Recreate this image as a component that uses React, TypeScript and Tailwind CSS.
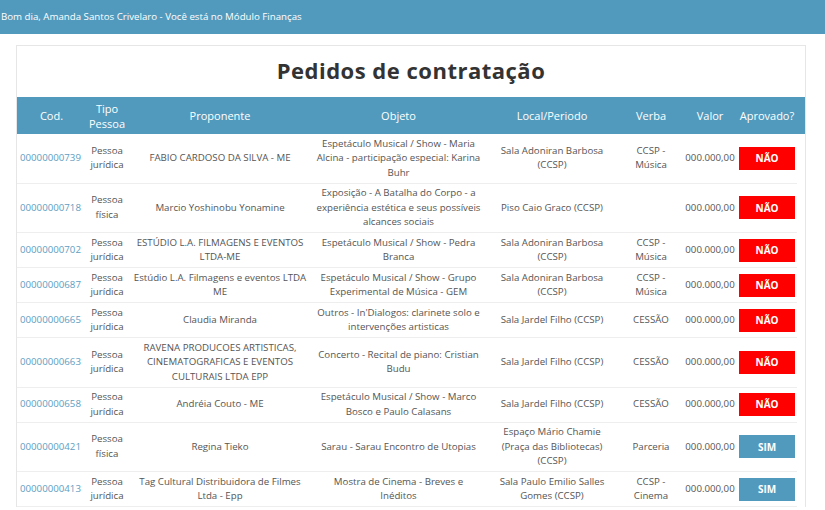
type Row = {
  cod: string;
  tipo: string;
  proponente: string[];
  objeto: string[];
  local: string[];
  verba: string[];
  aprovado: boolean;
};

const rows: Row[] = [
  {
    cod: "00000000739",
    tipo: "jurídica",
    proponente: ["FABIO CARDOSO DA SILVA - ME"],
    objeto: ["Espetáculo Musical / Show - Maria", "Alcina - participação especial: Karina", "Buhr"],
    local: ["Sala Adoniran Barbosa", "(CCSP)"],
    verba: ["CCSP -", "Música"],
    aprovado: false,
  },
  {
    cod: "00000000718",
    tipo: "física",
    proponente: ["Marcio Yoshinobu Yonamine"],
    objeto: ["Exposição - A Batalha do Corpo - a", "experiência estética e seus possíveis", "alcances sociais"],
    local: ["Piso Caio Graco (CCSP)"],
    verba: [],
    aprovado: false,
  },
  {
    cod: "00000000702",
    tipo: "jurídica",
    proponente: ["ESTÚDIO L.A. FILMAGENS E EVENTOS", "LTDA-ME"],
    objeto: ["Espetáculo Musical / Show - Pedra", "Branca"],
    local: ["Sala Adoniran Barbosa", "(CCSP)"],
    verba: ["CCSP -", "Música"],
    aprovado: false,
  },
  {
    cod: "00000000687",
    tipo: "jurídica",
    proponente: ["Estúdio L.A. Filmagens e eventos LTDA", "ME"],
    objeto: ["Espetáculo Musical / Show - Grupo", "Experimental de Música - GEM"],
    local: ["Sala Adoniran Barbosa", "(CCSP)"],
    verba: ["CCSP -", "Música"],
    aprovado: false,
  },
  {
    cod: "00000000665",
    tipo: "jurídica",
    proponente: ["Claudia Miranda"],
    objeto: ["Outros - In'Dialogos: clarinete solo e", "intervenções artisticas"],
    local: ["Sala Jardel Filho (CCSP)"],
    verba: ["CESSÃO"],
    aprovado: false,
  },
  {
    cod: "00000000663",
    tipo: "jurídica",
    proponente: ["RAVENA PRODUCOES ARTISTICAS,", "CINEMATOGRAFICAS E EVENTOS", "CULTURAIS LTDA EPP"],
    objeto: ["Concerto - Recital de piano: Cristian", "Budu"],
    local: ["Sala Jardel Filho (CCSP)"],
    verba: ["CESSÃO"],
    aprovado: false,
  },
  {
    cod: "00000000658",
    tipo: "jurídica",
    proponente: ["Andréia Couto - ME"],
    objeto: ["Espetáculo Musical / Show - Marco", "Bosco e Paulo Calasans"],
    local: ["Sala Jardel Filho (CCSP)"],
    verba: ["CESSÃO"],
    aprovado: false,
  },
  {
    cod: "00000000421",
    tipo: "física",
    proponente: ["Regina Tieko"],
    objeto: ["Sarau - Sarau Encontro de Utopias"],
    local: ["Espaço Mário Chamie", "(Praça das Bibliotecas)", "(CCSP)"],
    verba: ["Parceria"],
    aprovado: true,
  },
  {
    cod: "00000000413",
    tipo: "jurídica",
    proponente: ["Tag Cultural Distribuidora de Filmes", "Ltda - Epp"],
    objeto: ["Mostra de Cinema - Breves e", "Inéditos"],
    local: ["Sala Paulo Emilio Salles", "Gomes (CCSP)"],
    verba: ["CCSP -", "Cinema"],
    aprovado: true,
  },
];

function Lines({ items }: { items: string[] }) {
  return (
    <>
      {items.map((t, i) => (
        <span key={i} className="block whitespace-nowrap">
          {t}
        </span>
      ))}
    </>
  );
}

const cell = "border-b border-[#eeeeee] py-[2.5px] align-middle";

export default function App() {
  return (
    <div className="min-h-[510px] bg-white font-['Open_Sans',sans-serif]">
      <div className="flex h-[34px] items-center bg-[#519abd] pl-[1px] text-[9.7px] text-white">
        Bom dia, Amanda Santos Crivelaro - Você está no Módulo Finanças
      </div>
      <div className="ml-[16px] mt-[11px] w-[790px] border border-b-0 border-[#e6e6e6]">
        <h1 className="flex h-[51px] items-center justify-center pb-[3px] text-[22px] font-bold tracking-[0.5px] text-[#333]">
          Pedidos de contratação
        </h1>
        <table className="w-[788px] table-fixed border-collapse text-center">
          <colgroup>
            <col className="w-[69px]" />
            <col className="w-[42px]" />
            <col className="w-[184px]" />
            <col className="w-[173px]" />
            <col className="w-[134px]" />
            <col className="w-[64px]" />
            <col className="w-[54px]" />
            <col className="w-[60px]" />
            <col className="w-[8px]" />
          </colgroup>
          <thead>
            <tr className="h-[37px] bg-[#519abd] text-[11px] leading-[15px] text-white">
              <th className="font-normal">Cod.</th>
              <th className="font-normal">
                Tipo
                <br />
                Pessoa
              </th>
              <th className="font-normal">Proponente</th>
              <th className="font-normal">Objeto</th>
              <th className="font-normal">Local/Periodo</th>
              <th className="font-normal">Verba</th>
              <th className="font-normal">Valor</th>
              <th className="whitespace-nowrap font-normal">Aprovado?</th>
              <th />
            </tr>
          </thead>
          <tbody className="text-[9.7px] leading-[14.5px] text-[#555]">
            {rows.map((r) => (
              <tr key={r.cod}>
                <td className={`${cell} pl-[3px] text-left text-[#5d9ec2]`}>{r.cod}</td>
                <td className={cell}>
                  Pessoa
                  <br />
                  {r.tipo}
                </td>
                <td className={cell}>
                  <Lines items={r.proponente} />
                </td>
                <td className={cell}>
                  <Lines items={r.objeto} />
                </td>
                <td className={cell}>
                  <Lines items={r.local} />
                </td>
                <td className={cell}>
                  <Lines items={r.verba} />
                </td>
                <td className={`${cell} whitespace-nowrap`}>000.000,00</td>
                <td className={cell}>
                  <div
                    className={`mx-auto flex h-[23px] w-[56px] items-center justify-center text-[10px] font-bold text-white ${
                      r.aprovado ? "bg-[#519abd]" : "bg-[#ff0000]"
                    }`}
                  >
                    {r.aprovado ? "SIM" : "NÃO"}
                  </div>
                </td>
                <td />
              </tr>
            ))}
          </tbody>
        </table>
      </div>
    </div>
  );
}
